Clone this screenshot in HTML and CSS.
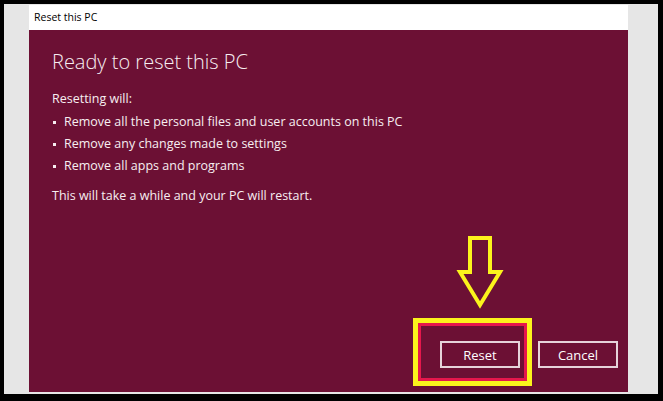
FILE: index.html
```html
<!DOCTYPE html>
<html lang="en">
<head>
    <meta charset="UTF-8">
    <meta name="viewport" content="width=device-width, initial-scale=1.0">
    <title>Reset this PC</title>
    <link rel="stylesheet" href="styles.css">
</head>
<body>

    <div class="frame">
        <div class="window">
            <div class="titlebar">Reset this PC</div>
            <div class="dialog">
                <h1>Ready to reset this PC</h1>
                <p class="lead">Resetting will:</p>
                <ul class="steps">
                    <li>Remove all the personal files and user accounts on this PC</li>
                    <li>Remove any changes made to settings</li>
                    <li>Remove all apps and programs</li>
                </ul>
                <p class="note">This will take a while and your PC will restart.</p>

                <div class="actions">
                    <button class="btn">Reset</button>
                    <button class="btn">Cancel</button>
                </div>

                <!-- annotation drawn over the screenshot -->
                <svg class="arrow" width="52" height="80" viewBox="0 0 52 80">
                    <polygon points="16,5 36,5 36,39 46,39 26,72 6,39 16,39" fill="none" stroke="#fbf31c" stroke-width="4" stroke-linejoin="miter"/>
                </svg>
                <div class="highlight"></div>
            </div>
        </div>
    </div>

</body>
</html>
```

FILE: styles.css
```css
body {
    margin: 0;
    background: #000;
    font-family: "Open Sans", "Noto Sans", sans-serif;
}
.frame {
    margin: 4px 5px 7px 4px;
    height: 388px;
    padding: 1px 30px 1px 25px;
    background: #e6e6e6;
}
.window {
    height: 387px;
    display: flex;
    flex-direction: column;
}
.titlebar {
    height: 25px;
    line-height: 24px;
    padding-left: 5px;
    background: #fff;
    color: #000;
    font-size: 10.5px;
}
.dialog {
    position: relative;
    flex: 1;
    background: #6c1034;
    color: #f7eef1;
    padding: 19px 0 0 23px;
    display: flex;
    flex-direction: column;
}
h1 {
    margin: 0;
    font-weight: 300;
    font-size: 20px;
    line-height: 26px;
}
.lead {
    margin: 14px 0 0;
    font-size: 12.5px;
    line-height: 20px;
}
.steps {
    margin: 2px 0 0;
    padding: 0;
    list-style: none;
    font-size: 12.5px;
}
.steps li {
    position: relative;
    padding-left: 12px;
    line-height: 22px;
}
.steps li::before {
    content: "";
    position: absolute;
    left: 1px;
    top: 10px;
    width: 3px;
    height: 3px;
    background: #f7eef1;
}
.note {
    margin: 9px 0 0;
    font-size: 12.5px;
    line-height: 20px;
}
.actions {
    margin-top: auto;
    margin-bottom: 24px;
    margin-right: 10px;
    display: flex;
    justify-content: flex-end;
    gap: 18px;
}
.btn {
    width: 80px;
    height: 27px;
    background: #6c1034;
    border: 2px solid #e6d3da;
    color: #fff;
    font-family: inherit;
    font-size: 13px;
    padding: 0;
}
.arrow {
    position: absolute;
    left: 425px;
    top: 203px;
}
.highlight {
    position: absolute;
    left: 384px;
    top: 288px;
    width: 109px;
    height: 58px;
    border: 5px solid #fbf31c;
    box-shadow: inset 0 0 0 3px #e5174c;
}
```
